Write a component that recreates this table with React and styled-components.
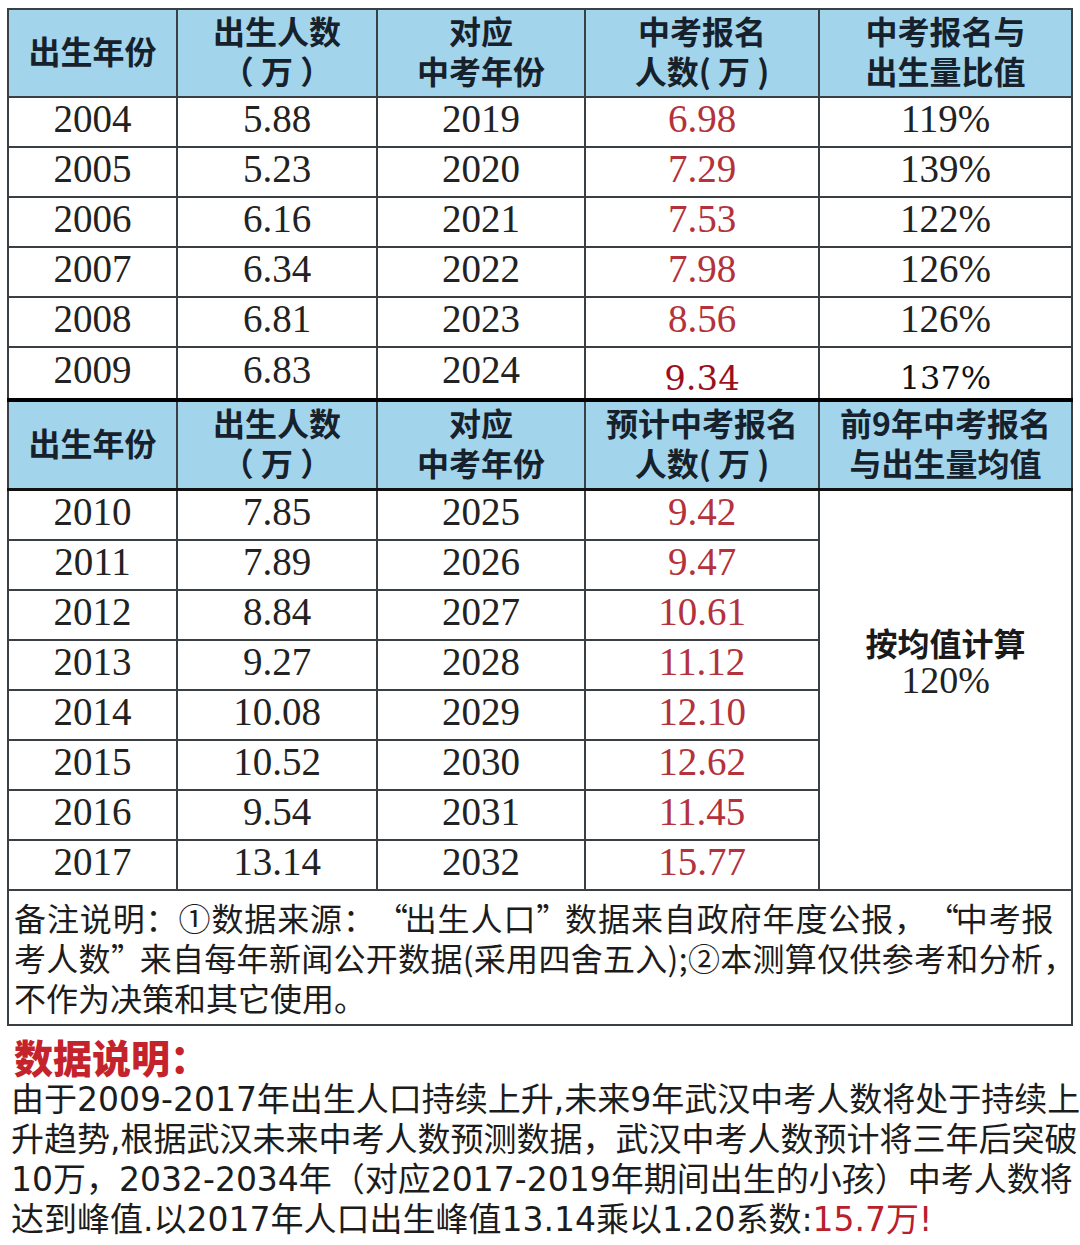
import React from 'react';
import styled, { createGlobalStyle } from 'styled-components';

const Global = createGlobalStyle`
  html, body { margin: 0; padding: 0; background: #fff; }
  body { font-family: "Noto Sans CJK SC", sans-serif; color: #1a1a1a; }
`;

const Page = styled.div`
  width: 1080px;
  box-sizing: border-box;
  padding: 8px 9px 0 7px;
`;

const Table = styled.table`
  width: 1064px;
  border-collapse: collapse;
  table-layout: fixed;
`;

const Head = styled.th`
  height: 80px;
  padding: 0 0 6px;
  background: #a2d4eb;
  border: 2px solid #3a3f44;
  border-top: ${(p) => (p.$thick ? '4px solid #000' : '2px solid #3a3f44')};
  border-bottom: ${(p) => (p.$thick ? '3px solid #111' : '2px solid #3a3f44')};
  color: #16212c;
  font-family: "Noto Sans CJK SC", sans-serif;
  font-weight: 700;
  font-size: 32px;
  line-height: 40px;
  text-align: center;
  vertical-align: middle;
`;

const Cell = styled.td`
  height: 42px;
  padding: 0 0 6px;
  border: 2px solid #3a3f44;
  text-align: center;
  vertical-align: middle;
  font-family: "Liberation Serif", serif;
  font-size: 39px;
  line-height: 42px;
  color: ${(p) => (p.$red ? '#b3323b' : '#222')};
`;

const Strong = styled.span`
  font-family: "DejaVu Serif", serif;
  font-size: ${(p) => p.$size}px;
  color: ${(p) => (p.$red ? '#9c0f1c' : '#111')};
  position: relative;
  top: 7px;
`;

const MergedCell = styled.td`
  padding: 0 0 58px;
  border: 2px solid #3a3f44;
  text-align: center;
  vertical-align: middle;
`;

const MergedLabel = styled.div`
  font-family: "Noto Sans CJK SC", sans-serif;
  font-weight: 700;
  font-size: 32px;
  line-height: 38px;
  color: #1a1a1a;
`;

const MergedValue = styled.div`
  font-family: "Liberation Serif", serif;
  font-size: 38px;
  line-height: 38px;
  color: #222;
`;

const NoteCell = styled.td`
  padding: 6px 0 7px 5px;
  border: 2px solid #3a3f44;
  text-align: left;
  font-family: "Noto Sans CJK SC", sans-serif;
  font-size: 32px;
  line-height: 40px;
  color: #1c1c1c;
`;

const Line = styled.div`
  white-space: nowrap;
  letter-spacing: ${(p) => p.$ls || 0}px;
`;

const Quote = styled.span`
  display: inline-block;
  width: 0.9em;
  text-align: ${(p) => (p.$open ? 'right' : 'left')};
`;

const Title = styled.div`
  margin: 6px 0 0 7px;
  font-family: "Noto Sans CJK SC", sans-serif;
  font-weight: 900;
  font-size: 39px;
  line-height: 48px;
  color: #c4232b;
`;

const Para = styled.div`
  margin: 0 -9px 0 4px;
  font-family: "DejaVu Sans", "Noto Sans CJK SC", sans-serif;
  font-size: 33px;
  line-height: 40px;
  color: #1c1c1c;
`;

const Red = styled.span`
  color: #b8202c;
`;

const top = [
  ['2004', '5.88', '2019', '6.98', '119%'],
  ['2005', '5.23', '2020', '7.29', '139%'],
  ['2006', '6.16', '2021', '7.53', '122%'],
  ['2007', '6.34', '2022', '7.98', '126%'],
  ['2008', '6.81', '2023', '8.56', '126%'],
];

const bottom = [
  ['2010', '7.85', '2025', '9.42'],
  ['2011', '7.89', '2026', '9.47'],
  ['2012', '8.84', '2027', '10.61'],
  ['2013', '9.27', '2028', '11.12'],
  ['2014', '10.08', '2029', '12.10'],
  ['2015', '10.52', '2030', '12.62'],
  ['2016', '9.54', '2031', '11.45'],
  ['2017', '13.14', '2032', '15.77'],
];

export default function App() {
  return (
    <Page>
      <Global />
      <Table>
        <colgroup>
          <col style={{ width: 169 }} />
          <col style={{ width: 200 }} />
          <col style={{ width: 208 }} />
          <col style={{ width: 234 }} />
          <col style={{ width: 253 }} />
        </colgroup>
        <tbody>
          <tr>
            <Head>出生年份</Head>
            <Head>出生人数<br />（ 万 ）</Head>
            <Head>对应<br />中考年份</Head>
            <Head>中考报名<br />人数( 万 )</Head>
            <Head>中考报名与<br />出生量比值</Head>
          </tr>
          {top.map((r) => (
            <tr key={r[0]}>
              <Cell>{r[0]}</Cell>
              <Cell>{r[1]}</Cell>
              <Cell>{r[2]}</Cell>
              <Cell $red>{r[3]}</Cell>
              <Cell>{r[4]}</Cell>
            </tr>
          ))}
          <tr>
            <Cell>2009</Cell>
            <Cell>6.83</Cell>
            <Cell>2024</Cell>
            <Cell><Strong $red $size={34}>9.34</Strong></Cell>
            <Cell><Strong $size={32}>137%</Strong></Cell>
          </tr>
          <tr>
            <Head $thick>出生年份</Head>
            <Head $thick>出生人数<br />（ 万 ）</Head>
            <Head $thick>对应<br />中考年份</Head>
            <Head $thick>预计中考报名<br />人数( 万 )</Head>
            <Head $thick>前9年中考报名<br />与出生量均值</Head>
          </tr>
          {bottom.map((r, i) => (
            <tr key={r[0]}>
              <Cell>{r[0]}</Cell>
              <Cell>{r[1]}</Cell>
              <Cell>{r[2]}</Cell>
              <Cell $red>{r[3]}</Cell>
              {i === 0 && (
                <MergedCell rowSpan={8}>
                  <MergedLabel>按均值计算</MergedLabel>
                  <MergedValue>120%</MergedValue>
                </MergedCell>
              )}
            </tr>
          ))}
          <tr>
            <NoteCell colSpan={5}>
              <Line $ls={0.9}>备注说明：①数据来源：<Quote $open>“</Quote>出生人口<Quote>”</Quote>数据来自政府年度公报，<Quote $open>“</Quote>中考报</Line>
              <Line $ls={0.3}>考人数<Quote>”</Quote>来自每年新闻公开数据(采用四舍五入);②本测算仅供参考和分析，</Line>
              <Line>不作为决策和其它使用。</Line>
            </NoteCell>
          </tr>
        </tbody>
      </Table>
      <Title>数据说明：</Title>
      <Para>
        <Line>由于2009-2017年出生人口持续上升,未来9年武汉中考人数将处于持续上</Line>
        <Line>升趋势,根据武汉未来中考人数预测数据，武汉中考人数预计将三年后突破</Line>
        <Line>10万，2032-2034年（对应2017-2019年期间出生的小孩）中考人数将</Line>
        <Line>达到峰值.以2017年人口出生峰值13.14乘以1.20系数:<Red>15.7万!</Red></Line>
      </Para>
    </Page>
  );
}
